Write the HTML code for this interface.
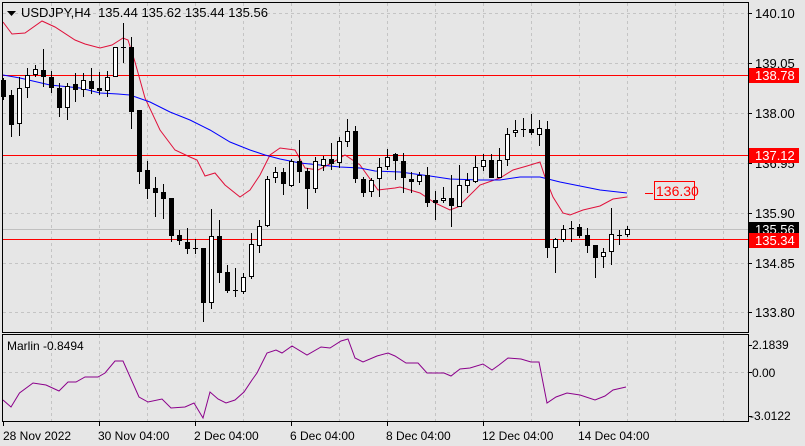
<!DOCTYPE html>
<html><head><meta charset="utf-8"><style>
html,body{margin:0;padding:0;background:#e6e6e6;}
svg{display:block;font-family:"Liberation Sans",sans-serif;}
</style></head><body>
<svg width="805" height="446" viewBox="0 0 805 446" xmlns="http://www.w3.org/2000/svg">
<rect x="0" y="0" width="805" height="446" fill="#e6e6e6"/>
<g stroke="#c4c4c4" stroke-dasharray="3,3" stroke-width="1" fill="none">
<path d="M51.5 3V332M99.5 3V332M147.5 3V332M195.5 3V332M243.5 3V332M291.5 3V332M339.5 3V332M387.5 3V332M435.5 3V332M483.5 3V332M531.5 3V332M579.5 3V332M627.5 3V332M675.5 3V332M723.5 3V332"/>
<path d="M51.5 335V421M99.5 335V421M147.5 335V421M195.5 335V421M243.5 335V421M291.5 335V421M339.5 335V421M387.5 335V421M435.5 335V421M483.5 335V421M531.5 335V421M579.5 335V421M627.5 335V421M675.5 335V421M723.5 335V421"/>
<path d="M3 13.5H748M3 63.5H748M3 113.5H748M3 163.5H748M3 213.5H748M3 263.5H748M3 312.5H748"/>
<path d="M3 372.5H748"/>
</g>
<line x1="3" y1="229.5" x2="748" y2="229.5" stroke="#c0c0c0"/>
<g stroke="#ff0000" stroke-width="1" shape-rendering="crispEdges">
<rect x="3" y="75" width="745" height="1" fill="#ff0000" stroke="none"/>
<rect x="3" y="155" width="745" height="1" fill="#ff0000" stroke="none"/>
<rect x="3" y="239" width="745" height="1" fill="#ff0000" stroke="none"/>
</g>
<polyline fill="none" stroke="#e0103a" stroke-width="1" points="3,22 12,34 25,33 42,21 55,27 75,40 85,44 100,48 112,45 123,38 128,40 135,62 145,98 160,130 175,150 190,157 197,160 205,176 215,173 225,185 240,197 250,190 260,175 270,155 280,148 295,150 305,168 318,170 330,164 345,155 360,165 378,190 395,188 400,187 420,193 435,203 450,210 458,207 480,185 500,178 513,170 527,166 540,162 545,177 553,197 563,213 570,215 583,210 600,206 613,199 627,197"/>
<polyline fill="none" stroke="#0000ff" stroke-width="1" points="3,75 20,78 50,85 80,88 100,93 118,94 130,95 150,102 170,112 190,120 210,130 230,142 250,150 265,155 280,159 300,163 320,165 340,167 360,168 375,171 400,172 430,176 450,179 480,180 500,180 520,177 540,177 560,182 580,186 600,190 627,193"/>
<g stroke="#000" stroke-width="1" shape-rendering="crispEdges">
<path d="M3.5 78V100M11.5 90V137M19.5 77V136M27.5 68V98M35.5 65V77M43.5 49V87M51.5 71V93M59.5 83V117M67.5 83V120M75.5 73V102M83.5 73V97M91.5 68V94M99.5 72V95M107.5 71V97M115.5 47V77M123.5 23V63M131.5 37V129M139.5 110V184M147.5 161V199M155.5 177V217M163.5 184V219M171.5 198V242M179.5 230V245M187.5 228V254M195.5 239V254M203.5 248V322M211.5 209V309M219.5 220V283M227.5 265V293M235.5 268V297M243.5 273V294M251.5 233V279M259.5 220V253M267.5 176V227M275.5 167V183M283.5 168V195M291.5 159V187M299.5 140V183M307.5 168V209M315.5 157V193M323.5 156V171M331.5 143V170M339.5 137V168M347.5 119V147M355.5 126V183M363.5 177V197M371.5 178V197M379.5 158V197M387.5 149V170M395.5 153V180M403.5 153V193M411.5 172V193M419.5 172V185M427.5 167V207M435.5 191V220M443.5 187V203M451.5 175V227M459.5 165V207M467.5 173V193M475.5 156V183M483.5 154V171M491.5 154V178M499.5 148V178M507.5 128V166M515.5 120V137M523.5 118V137M531.5 114V135M539.5 120V146M547.5 121V258M555.5 238V273M563.5 225V242M571.5 221V242M579.5 224V238M587.5 228V253M595.5 245V278M603.5 248V268M611.5 208V265M619.5 230V245M627.5 226V237"/>
<path d="M121 47.5H126M193 248.5H198M233 290.5H238M521 129.5H526M569 228.5H574M617 235.5H622"/>
</g>
<g fill="#000" shape-rendering="crispEdges">
<rect x="1" y="80" width="5" height="17"/><rect x="9" y="95" width="5" height="30"/><rect x="41" y="70" width="5" height="7"/><rect x="49" y="77" width="5" height="11"/><rect x="57" y="88" width="5" height="20"/><rect x="73" y="84" width="5" height="6"/><rect x="89" y="81" width="5" height="8"/><rect x="97" y="88" width="5" height="3"/><rect x="129" y="47" width="5" height="65"/><rect x="137" y="110" width="5" height="62"/><rect x="145" y="170" width="5" height="19"/><rect x="153" y="188" width="5" height="5"/><rect x="161" y="192" width="5" height="7"/><rect x="169" y="198" width="5" height="38"/><rect x="177" y="235" width="5" height="6"/><rect x="185" y="242" width="5" height="7"/><rect x="201" y="248" width="5" height="55"/><rect x="217" y="236" width="5" height="37"/><rect x="225" y="272" width="5" height="19"/><rect x="281" y="172" width="5" height="12"/><rect x="297" y="161" width="5" height="11"/><rect x="305" y="171" width="5" height="18"/><rect x="329" y="159" width="5" height="5"/><rect x="353" y="131" width="5" height="48"/><rect x="361" y="179" width="5" height="14"/><rect x="393" y="154" width="5" height="7"/><rect x="401" y="161" width="5" height="17"/><rect x="409" y="179" width="5" height="3"/><rect x="425" y="175" width="5" height="28"/><rect x="433" y="200" width="5" height="3"/><rect x="449" y="198" width="5" height="8"/><rect x="489" y="160" width="5" height="18"/><rect x="529" y="129" width="5" height="4"/><rect x="545" y="129" width="5" height="119"/><rect x="577" y="227" width="5" height="9"/><rect x="585" y="235" width="5" height="11"/><rect x="593" y="245" width="5" height="13"/>
</g>
<g fill="#fff" stroke="#000" stroke-width="1" shape-rendering="crispEdges">
<rect x="17.5" y="88.5" width="4" height="35"/><rect x="25.5" y="75.5" width="4" height="12"/><rect x="33.5" y="69.5" width="4" height="5"/><rect x="65.5" y="86.5" width="4" height="21"/><rect x="81.5" y="80.5" width="4" height="9"/><rect x="105.5" y="77.5" width="4" height="13"/><rect x="113.5" y="47.5" width="4" height="29"/><rect x="209.5" y="236.5" width="4" height="66"/><rect x="241.5" y="277.5" width="4" height="14"/><rect x="249.5" y="244.5" width="4" height="32"/><rect x="257.5" y="226.5" width="4" height="19"/><rect x="265.5" y="179.5" width="4" height="46"/><rect x="273.5" y="172.5" width="4" height="5"/><rect x="289.5" y="161.5" width="4" height="24"/><rect x="313.5" y="161.5" width="4" height="27"/><rect x="321.5" y="159.5" width="4" height="6"/><rect x="337.5" y="141.5" width="4" height="21"/><rect x="345.5" y="131.5" width="4" height="10"/><rect x="369.5" y="180.5" width="4" height="11"/><rect x="377.5" y="167.5" width="4" height="11"/><rect x="385.5" y="157.5" width="4" height="9"/><rect x="417.5" y="175.5" width="4" height="6"/><rect x="441.5" y="198.5" width="4" height="2"/><rect x="457.5" y="185.5" width="4" height="21"/><rect x="465.5" y="180.5" width="4" height="5"/><rect x="473.5" y="167.5" width="4" height="14"/><rect x="481.5" y="160.5" width="4" height="6"/><rect x="497.5" y="160.5" width="4" height="17"/><rect x="505.5" y="134.5" width="4" height="25"/><rect x="513.5" y="130.5" width="4" height="2"/><rect x="537.5" y="128.5" width="4" height="6"/><rect x="553.5" y="239.5" width="4" height="8"/><rect x="561.5" y="229.5" width="4" height="10"/><rect x="601.5" y="252.5" width="4" height="4"/><rect x="609.5" y="234.5" width="4" height="17"/><rect x="625.5" y="229.5" width="4" height="5"/>
</g>
<line x1="645" y1="193.5" x2="653" y2="193.5" stroke="#ff0000"/>
<rect x="654.5" y="181.5" width="40" height="18" fill="#e6e6e6" stroke="#ff0000"/>
<text x="656" y="196" font-size="14" fill="#ff0000">136.30</text>
<polyline fill="none" stroke="#8b008b" stroke-width="1" points="3,400 11,407 19.5,393 33,383 46,385 59,391 68,382 76,382 85,377 98,377 105,373 115,361 123,361 139,397 148,402 162,399 171,408 185,407 194,403 203,418 210,392 218,399 226,403 235,400 244,392 252,380 257,373 267,353 276,350 282,353 292,346 307,355 321,347 330,348 341,341 348,339 355,358 363,362 377,356 388,353 395,356 406,363 418,363 427,373 444,373 451,376 460,369 470,368 483,364 492,370 499,365 508,358 521,359 531,362 539,362 547,403 556,397 567,393 580,395 595,400 605,396 613,390 626,387"/>
<g fill="none" stroke="#000" stroke-width="1" shape-rendering="crispEdges">
<path d="M2.5 2.5H748.5V332.5H2.5Z"/>
<path d="M2.5 334.5H748.5V421.5H2.5Z"/>
<path d="M748 13.5h4M748 63.5h4M748 113.5h4M748 163.5h4M748 213.5h4M748 263.5h4M748 312.5h4M748 345.5h4M748 372.5h4M748 416.5h4"/>
<path d="M3.5 422v4M99.5 422v4M195.5 422v4M291.5 422v4M387.5 422v4M483.5 422v4M579.5 422v4"/>
</g>
<path d="M7 11h9l-4.5 5z" fill="#000"/>
<text x="21" y="17" font-size="13" fill="#000">USDJPY,H4&#160;&#160;135.44 135.62 135.44 135.56</text>
<g font-size="13" fill="#000">
<text x="755" y="18">140.10</text>
<text x="755" y="68">139.05</text>
<text x="755" y="118">138.00</text>
<text x="755" y="168">136.95</text>
<text x="755" y="218">135.90</text>
<text x="755" y="268">134.85</text>
<text x="755" y="317">133.80</text>
</g>
<rect x="749" y="68" width="50" height="15" fill="#ff0000"/>
<text x="755" y="80" font-size="13" fill="#fff">138.78</text>
<rect x="749" y="148" width="50" height="15" fill="#ff0000"/>
<text x="755" y="160" font-size="13" fill="#fff">137.12</text>
<rect x="749" y="222" width="50" height="13" fill="#000"/>
<text x="755" y="234" font-size="13" fill="#fff">135.56</text>
<rect x="749" y="233" width="50" height="15" fill="#ff0000"/>
<text x="755" y="245" font-size="13" fill="#fff">135.34</text>
<text x="7" y="350" font-size="12" fill="#000">Marlin -0.8494</text>
<g font-size="12" fill="#000">
<text x="752" y="349">2.1839</text>
<text x="752" y="377">0.00</text>
<text x="750" y="420">-3.0122</text>
</g>
<g font-size="12" fill="#000">
<text x="3" y="440">28 Nov 2022</text>
<text x="98" y="440">30 Nov 04:00</text>
<text x="194" y="440">2 Dec 04:00</text>
<text x="290" y="440">6 Dec 04:00</text>
<text x="386" y="440">8 Dec 04:00</text>
<text x="482" y="440">12 Dec 04:00</text>
<text x="578" y="440">14 Dec 04:00</text>
</g>
</svg>
</body></html>
